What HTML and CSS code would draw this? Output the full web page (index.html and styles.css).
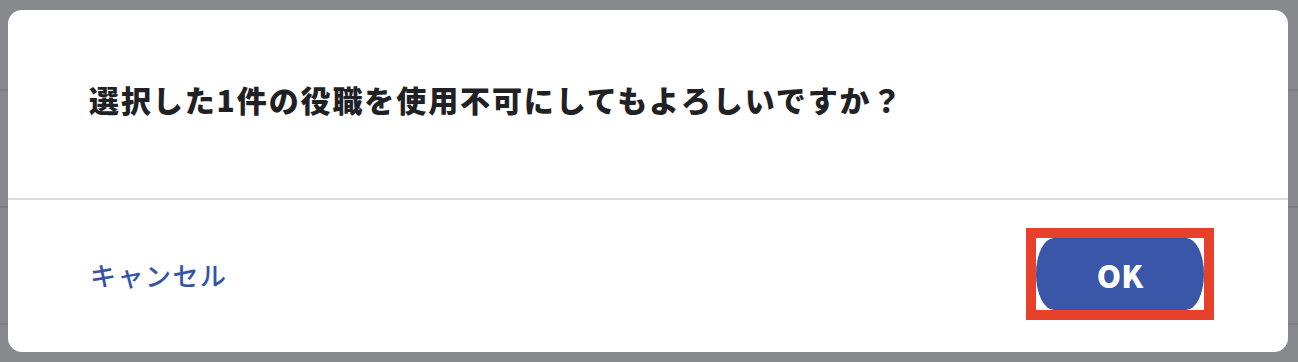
FILE: index.html
```html
<!DOCTYPE html>
<html lang="ja">
<head>
  <meta charset="UTF-8" />
  <meta name="viewport" content="width=device-width, initial-scale=1.0" />
  <title>役職 - 使用不可</title>
  <link rel="stylesheet" href="styles.css">
</head>
<body>
  <div class="page">
    <div class="row row-first"></div>
    <div class="row"></div>
    <div class="row"></div>
  </div>

  <div class="overlay">
    <div class="modal">
      <div class="modal-body">
        <p class="modal-title">選択した1件の役職を使用不可にしてもよろしいですか？</p>
      </div>
      <div class="modal-footer">
        <a href="#" class="cancel-link">キャンセル</a>
        <span class="highlight">
          <button type="button" class="ok-btn">OK</button>
        </span>
      </div>
    </div>
  </div>
</body>
</html>
```

FILE: styles.css
```css
body {
  font-family: "Noto Sans CJK JP", "Noto Sans", sans-serif;
  background-color: #87898c;
  margin: 0;
  padding: 0;
  height: 362px;
  overflow: hidden;
}
.row {
  height: 115px;
  border-bottom: 2px solid #7c7e81;
}
.row-first {
  height: 89px;
}
.overlay {
  position: fixed;
  inset: 0;
  padding: 10px 10px 10px 8px;
}
.modal {
  background: white;
  border-radius: 14px;
  height: 342px;
  display: flex;
  flex-direction: column;
}
.modal-body {
  height: 190px;
  padding: 69px 80px 0 81px;
  box-sizing: border-box;
  border-bottom: 2px solid #dcdce2;
}
.modal-title {
  margin: 0;
  font-size: 30px;
  line-height: 40px;
  font-weight: 900;
  letter-spacing: 1.9px;
  color: #1f2125;
}
.modal-footer {
  flex: 1;
  display: flex;
  align-items: center;
  justify-content: space-between;
  padding: 0 74px 4px 82px;
}
.cancel-link {
  color: #3554a6;
  font-size: 26px;
  font-weight: 500;
  letter-spacing: 1.5px;
  text-decoration: none;
}
.highlight {
  display: block;
  border: 10px solid #e8412b;
}
.ok-btn {
  display: block;
  width: 168px;
  height: 72px;
  border: none;
  border-radius: 18px / 36px;
  background-color: #3956a8;
  color: white;
  font-family: inherit;
  font-size: 31px;
  font-weight: 900;
  cursor: pointer;
}
```
